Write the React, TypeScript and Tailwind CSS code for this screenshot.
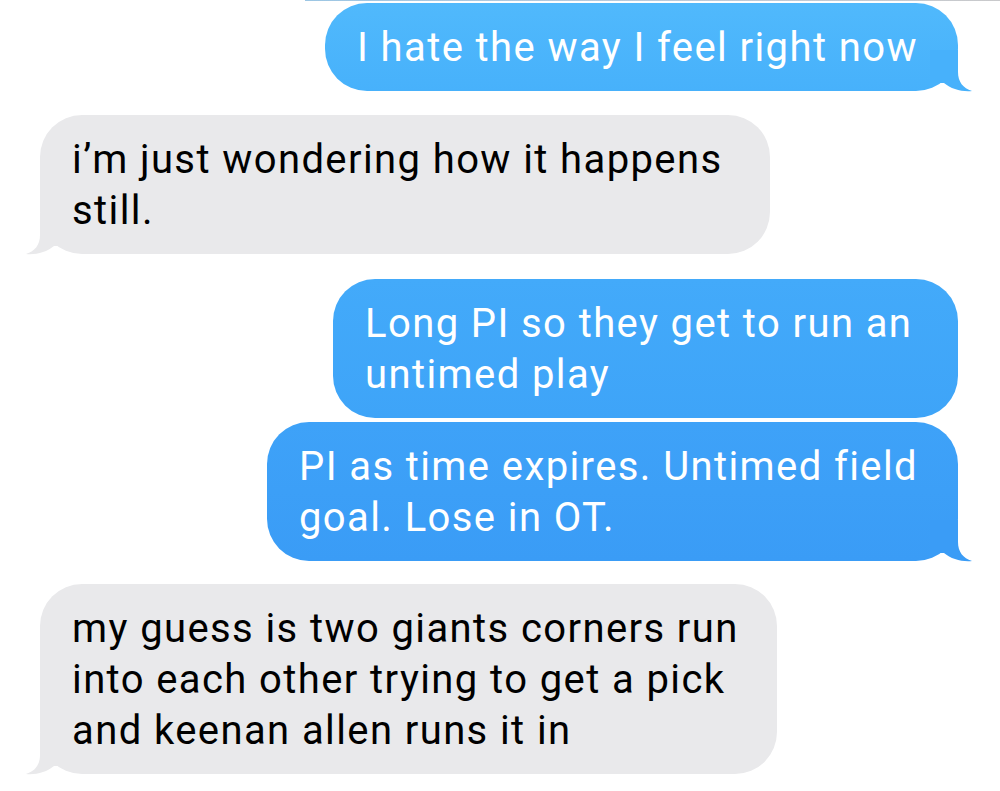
import React from 'react';

type Msg = {
  id: number;
  from: 'me' | 'them';
  lines: string[];
  width: string;
  tail: boolean;
  bg: string;
  tailColor: string;
  gap: string;
};

const messages: Msg[] = [
  {
    id: 1,
    from: 'me',
    lines: ['I hate the way I feel right now'],
    width: 'w-[633px]',
    tail: true,
    bg: 'bg-gradient-to-b from-[#50b9fc] to-[#47b1fb]',
    tailColor: '#47b1fb',
    gap: 'mt-[2px]',
  },
  {
    id: 2,
    from: 'them',
    lines: ['i’m just wondering how it happens', 'still.'],
    width: 'w-[730px]',
    tail: true,
    bg: 'bg-[#e9e9eb]',
    tailColor: '#e9e9eb',
    gap: 'mt-[24px]',
  },
  {
    id: 3,
    from: 'me',
    lines: ['Long PI so they get to run an', 'untimed play'],
    width: 'w-[625px]',
    tail: false,
    bg: 'bg-gradient-to-b from-[#43aafa] to-[#3ea4f8]',
    tailColor: '#3ea4f8',
    gap: 'mt-[25px]',
  },
  {
    id: 4,
    from: 'me',
    lines: ['PI as time expires. Untimed field', 'goal. Lose in OT.'],
    width: 'w-[691px]',
    tail: true,
    bg: 'bg-gradient-to-b from-[#3ea2f8] to-[#3a9cf6]',
    tailColor: '#3a9cf6',
    gap: 'mt-[4px]',
  },
  {
    id: 5,
    from: 'them',
    lines: ['my guess is two giants corners run', 'into each other trying to get a pick', 'and keenan allen runs it in'],
    width: 'w-[737px]',
    tail: true,
    bg: 'bg-[#e9e9eb]',
    tailColor: '#e9e9eb',
    gap: 'mt-[23px]',
  },
];

// little curl at the bottom corner of the bubble
const Tail = ({ mine, color }: { mine: boolean; color: string }) => (
  <svg
    width="44"
    height="42"
    viewBox="0 0 44 42"
    className={
      mine
        ? 'absolute right-[-16px] bottom-[-1px]'
        : 'absolute left-[-16px] bottom-[-1px] -scale-x-100'
    }
  >
    <path d="M28 0 L28 22 C28 32 33 38 42 41 C32 42 21 39 14 33 L0 33 L0 0 Z" fill={color} />
  </svg>
);

const Bubble = ({ msg }: { msg: Msg }) => {
  const mine = msg.from === 'me';
  return (
    <div
      className={`relative ${msg.gap} ${msg.width} ${msg.bg} ${
        mine ? 'self-end mr-[42px] text-white' : 'self-start ml-[40px] text-black'
      } rounded-[42px] pl-[32px] pt-[19px] pb-[18px] text-[40px] leading-[51px] tracking-[1.4px] whitespace-nowrap`}
    >
      {msg.tail && <Tail mine={mine} color={msg.tailColor} />}
      <div className="relative">
        {msg.lines.map((line, i) => (
          <div key={i}>{line}</div>
        ))}
      </div>
    </div>
  );
};

export default function App() {
  return (
    <div
      className="w-[1000px] h-[791px] bg-white overflow-hidden flex flex-col"
      style={{ fontFamily: 'Roboto, "Liberation Sans", sans-serif' }}
    >
      <div className="h-px ml-[305px] bg-gradient-to-r from-[#9cc6e4] via-[#b9cadb] to-[#c9c9cb]" />
      {messages.map((m) => (
        <Bubble key={m.id} msg={m} />
      ))}
    </div>
  );
}
